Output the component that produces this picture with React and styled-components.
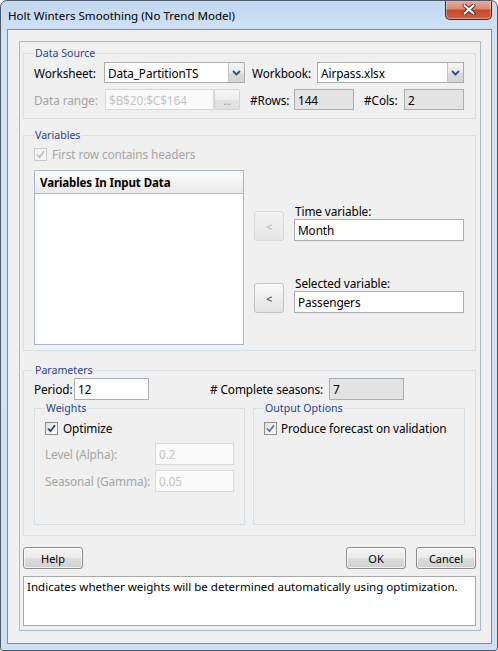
import React from "react";
import styled, { createGlobalStyle } from "styled-components";

const GlobalStyle = createGlobalStyle`
  html, body {
    margin: 0;
    padding: 0;
    background: #ffffff;
  }
  body {
    font-family: "Noto Sans", "DejaVu Sans", sans-serif;
    font-size: 11.8px;
    letter-spacing: -0.1px;
    color: #000;
  }
  * {
    box-sizing: border-box;
  }
`;

const Window = styled.div`
  width: 498px;
  height: 651px;
  border: 1px solid #4f5a68;
  border-radius: 7px 7px 3px 3px;
  background: linear-gradient(180deg, #c3d9f1 0%, #d2e3f6 6%, #cde0f4 100%);
  display: flex;
  flex-direction: column;
  overflow: hidden;
`;

const TitleBar = styled.div`
  height: 28px;
  display: flex;
  justify-content: space-between;
  align-items: flex-start;
  padding-left: 7px;
`;

const Title = styled.span`
  margin-top: 7px;
  font-size: 11.55px;
  line-height: 15px;
  letter-spacing: 0;
  color: #000;
`;

const CloseButton = styled.div`
  width: 47px;
  height: 20px;
  margin-right: 5px;
  margin-top: -1px;
  border: 1px solid #4b2420;
  border-top: none;
  border-radius: 0 0 5px 5px;
  background: linear-gradient(180deg, #eab0a2 0%, #dc8a76 45%, #c4482a 55%, #d2603f 100%);
  box-shadow: inset 0 0 0 1px rgba(255, 255, 255, 0.35);
  display: flex;
  align-items: center;
  justify-content: center;
`;

const Client = styled.div`
  flex: 1;
  margin: 0 5px 6px 6px;
  border: 1px solid #7b8ea7;
  background: #f0f0f0;
  padding: 11px 11px 12px 11px;
  display: flex;
`;

const Panel = styled.div`
  flex: 1;
  border: 1px solid #a6b9d2;
  padding: 4px 4px 4px 3px;
  display: flex;
  flex-direction: column;
`;

const Group = styled.fieldset`
  margin: ${(p) => p.$mt || 0}px 0 0 0;
  padding: ${(p) => p.$pad || "2px 10px 8px 10px"};
  border: 1px solid #d5dfe5;
  min-width: 0;
  width: ${(p) => (p.$w ? `${p.$w}px` : "auto")};
  height: ${(p) => (p.$h ? `${p.$h}px` : "auto")};
`;

const Legend = styled.legend`
  margin-left: 0;
  padding: 0 1px;
  font-size: 10.6px;
  line-height: 14px;
  letter-spacing: 0;
  color: #1f4590;
`;

const Row = styled.div`
  display: flex;
  align-items: center;
  height: ${(p) => p.$h || 21}px;
  margin-top: ${(p) => p.$mt || 0}px;
`;

const Label = styled.span`
  width: ${(p) => (p.$w ? `${p.$w}px` : "auto")};
  margin-left: ${(p) => p.$ml || 0}px;
  color: ${(p) => (p.$disabled ? "#a4a4a4" : "#000")};
  white-space: nowrap;
  flex-shrink: 0;
`;

const TextBox = styled.div`
  width: ${(p) => p.$w}px;
  height: ${(p) => p.$h || 21}px;
  border: 1px solid ${(p) => (p.$disabled ? "#d9d9d9" : "#abadb3")};
  background: ${(p) => (p.$readonly ? "#e3e3e3" : p.$disabled ? "#fbfbfb" : "#fff")};
  color: ${(p) => (p.$disabled ? "#c4c4c4" : "#000")};
  padding: 0 3px;
  display: flex;
  align-items: center;
  flex-shrink: 0;
  white-space: nowrap;
  overflow: hidden;
`;

const Combo = styled.div`
  width: ${(p) => p.$w}px;
  height: 21px;
  border: 1px solid #acacac;
  background: #fff;
  display: flex;
  align-items: stretch;
  flex-shrink: 0;
`;

const ComboText = styled.span`
  flex: 1;
  padding-left: 3px;
  display: flex;
  align-items: center;
`;

const ArrowButton = styled.span`
  width: 16px;
  border-left: 1px solid #c5c5c5;
  background: linear-gradient(180deg, #f4f4f4 0%, #e9e9e9 50%, #dcdcdc 51%, #d4d4d4 100%);
  display: flex;
  align-items: center;
  justify-content: center;
`;

const SmallButton = styled.div`
  width: 26px;
  height: 21px;
  border: 1px solid #d4d4d4;
  border-radius: 2px;
  background: linear-gradient(180deg, #f6f6f6 0%, #eeeeee 50%, #e4e4e4 51%, #e0e0e0 100%);
  color: #9a9a9a;
  display: flex;
  align-items: flex-end;
  justify-content: center;
  padding-bottom: 3px;
  font-size: 10px;
  line-height: 10px;
  flex-shrink: 0;
`;

const Check = styled.span`
  width: 13px;
  height: 13px;
  border: 1px solid ${(p) => (p.$disabled ? "#cbcbcb" : "#8e8f8f")};
  background: ${(p) =>
    p.$disabled
      ? "#f4f4f4"
      : "linear-gradient(135deg, #dcdcdc 0%, #f4f4f4 60%, #ffffff 100%)"};
  display: flex;
  align-items: center;
  justify-content: center;
  flex-shrink: 0;
  margin-right: ${(p) => p.$gap || 5}px;
`;

const VarArea = styled.div`
  display: flex;
  margin-top: 8px;
`;

const ListBox = styled.div`
  width: 210px;
  height: 175px;
  border: 1px solid #a5b8cf;
  background: #fff;
  flex-shrink: 0;
`;

const ListHeader = styled.div`
  height: 23px;
  border-bottom: 1px solid #a5b8cf;
  background: linear-gradient(180deg, #ffffff 0%, #f3f3f3 50%, #e9e9e9 100%);
  font-weight: bold;
  font-size: 11.5px;
  padding-left: 5px;
  display: flex;
  align-items: center;
`;

const MoverColumn = styled.div`
  display: flex;
  flex-direction: column;
  margin-left: 10px;
  padding-top: 34px;
`;

const Mover = styled.div`
  display: flex;
  align-items: flex-end;
  margin-top: ${(p) => p.$mt || 0}px;
`;

const MoveButton = styled.div`
  width: 30px;
  height: 30px;
  border: 1px solid ${(p) => (p.$disabled ? "#d8d8d8" : "#c4c4c4")};
  border-radius: 3px;
  background: ${(p) =>
    p.$disabled
      ? "linear-gradient(180deg, #f2f2f2 0%, #e6e6e6 100%)"
      : "linear-gradient(180deg, #fafafa 0%, #eeeeee 50%, #e2e2e2 100%)"};
  color: ${(p) => (p.$disabled ? "#b0b0b0" : "#333")};
  display: flex;
  align-items: center;
  justify-content: center;
  font-size: 11px;
  margin-right: 10px;
`;

const Field = styled.div`
  display: flex;
  flex-direction: column;
`;

const FieldLabel = styled.span`
  height: 15px;
  line-height: 15px;
  padding-left: 1px;
`;

const SubGroups = styled.div`
  display: flex;
  gap: 8px;
  margin-top: 1px;
`;

const ButtonRow = styled.div`
  display: flex;
  align-items: center;
  gap: 10px;
  margin-top: 11px;
`;

const Spacer = styled.div`
  flex: 1;
`;

const Button = styled.div`
  width: 60px;
  height: 22px;
  border: 1px solid #8c8c8c;
  border-radius: 3px;
  background: linear-gradient(180deg, #f3f3f3 0%, #ebebeb 50%, #dddddd 51%, #cfcfcf 100%);
  box-shadow: inset 0 0 0 1px rgba(255, 255, 255, 0.7);
  display: flex;
  align-items: center;
  justify-content: center;
  font-size: 11px;
  letter-spacing: 0;
`;

const Description = styled.div`
  margin-top: 7px;
  height: 50px;
  border: 1px solid #a8a8a8;
  background: #fff;
  padding: 2px 3px;
  font-size: 11.55px;
  letter-spacing: 0;
  line-height: 16px;
  white-space: nowrap;
  overflow: hidden;
`;

const Chevron = () => (
  <svg width="9" height="6" viewBox="0 0 9 6">
    <path d="M1 1 L4.5 4.5 L8 1" fill="none" stroke="#2a4f86" strokeWidth="1.8" />
  </svg>
);

const Tick = ({ color }) => (
  <svg width="9" height="9" viewBox="0 0 9 9">
    <path d="M1 4.5 L3.5 7.2 L8 1.2" fill="none" stroke={color} strokeWidth="1.8" />
  </svg>
);

const CloseGlyph = () => (
  <svg width="14" height="11" viewBox="0 0 14 11">
    <path
      d="M2.5 1.5 L11.5 9.5 M11.5 1.5 L2.5 9.5"
      stroke="#5a2a22"
      strokeWidth="4"
      strokeLinecap="round"
    />
    <path
      d="M2.5 1.5 L11.5 9.5 M11.5 1.5 L2.5 9.5"
      stroke="#ffffff"
      strokeWidth="2.2"
      strokeLinecap="round"
    />
  </svg>
);

const App = () => {
  return (
    <>
      <GlobalStyle />
      <Window>
        <TitleBar>
          <Title>Holt Winters Smoothing (No Trend Model)</Title>
          <CloseButton>
            <CloseGlyph />
          </CloseButton>
        </TitleBar>
        <Client>
          <Panel>
            <Group>
              <Legend>Data Source</Legend>
              <Row>
                <Label $w={70}>Worksheet:</Label>
                <Combo $w={141}>
                  <ComboText>Data_PartitionTS</ComboText>
                  <ArrowButton>
                    <Chevron />
                  </ArrowButton>
                </Combo>
                <Label $w={65} $ml={7}>
                  Workbook:
                </Label>
                <Combo $w={147}>
                  <ComboText>Airpass.xlsx</ComboText>
                  <ArrowButton>
                    <Chevron />
                  </ArrowButton>
                </Combo>
              </Row>
              <Row $mt={6}>
                <Label $w={71} $disabled>
                  Data range:
                </Label>
                <TextBox $w={109} $disabled>
                  $B$20:$C$164
                </TextBox>
                <SmallButton>...</SmallButton>
                <Label $w={44} $ml={10}>
                  #Rows:
                </Label>
                <TextBox $w={60} $readonly>
                  144
                </TextBox>
                <Label $w={40} $ml={10}>
                  #Cols:
                </Label>
                <TextBox $w={60} $readonly>
                  2
                </TextBox>
              </Row>
            </Group>

            <Group $mt={9} $pad="4px 10px 5px 10px">
              <Legend>Variables</Legend>
              <Row $h={16}>
                <Check $disabled>
                  <Tick color="#c2c2c2" />
                </Check>
                <Label $disabled>First row contains headers</Label>
              </Row>
              <VarArea>
                <ListBox>
                  <ListHeader>Variables In Input Data</ListHeader>
                </ListBox>
                <MoverColumn>
                  <Mover>
                    <MoveButton $disabled>&lt;</MoveButton>
                    <Field>
                      <FieldLabel>Time variable:</FieldLabel>
                      <TextBox $w={170} $h={22}>
                        Month
                      </TextBox>
                    </Field>
                  </Mover>
                  <Mover $mt={35}>
                    <MoveButton>&lt;</MoveButton>
                    <Field>
                      <FieldLabel>Selected variable:</FieldLabel>
                      <TextBox $w={170} $h={22}>
                        Passengers
                      </TextBox>
                    </Field>
                  </Mover>
                </MoverColumn>
              </VarArea>
            </Group>

            <Group $mt={12} $pad="1px 10px 10px 10px">
              <Legend>Parameters</Legend>
              <Row $h={22}>
                <Label $w={40}>Period:</Label>
                <TextBox $w={75} $h={22}>
                  12
                </TextBox>
                <Label $w={119} $ml={61}>
                  # Complete seasons:
                </Label>
                <TextBox $w={75} $h={22} $readonly>
                  7
                </TextBox>
              </Row>
              <SubGroups>
                <Group $w={211} $h={124} $pad="5px 10px 0 10px">
                  <Legend>Weights</Legend>
                  <Row $h={16}>
                    <Check>
                      <Tick color="#1f3f8f" />
                    </Check>
                    <Label>Optimize</Label>
                  </Row>
                  <Row $h={22} $mt={7}>
                    <Label $w={110} $disabled>
                      Level (Alpha):
                    </Label>
                    <TextBox $w={79} $h={22} $disabled>
                      0.2
                    </TextBox>
                  </Row>
                  <Row $h={22} $mt={5}>
                    <Label $w={110} $disabled>
                      Seasonal (Gamma):
                    </Label>
                    <TextBox $w={79} $h={22} $disabled>
                      0.05
                    </TextBox>
                  </Row>
                </Group>
                <Group $w={212} $h={124} $pad="5px 10px 0 10px">
                  <Legend>Output Options</Legend>
                  <Row $h={16}>
                    <Check $gap={4}>
                      <Tick color="#5f72a0" />
                    </Check>
                    <Label>Produce forecast on validation</Label>
                  </Row>
                </Group>
              </SubGroups>
            </Group>

            <ButtonRow>
              <Button>Help</Button>
              <Spacer />
              <Button>OK</Button>
              <Button>Cancel</Button>
            </ButtonRow>
            <Description>
              Indicates whether weights will be determined automatically using optimization.
            </Description>
          </Panel>
        </Client>
      </Window>
    </>
  );
};

export default App;
